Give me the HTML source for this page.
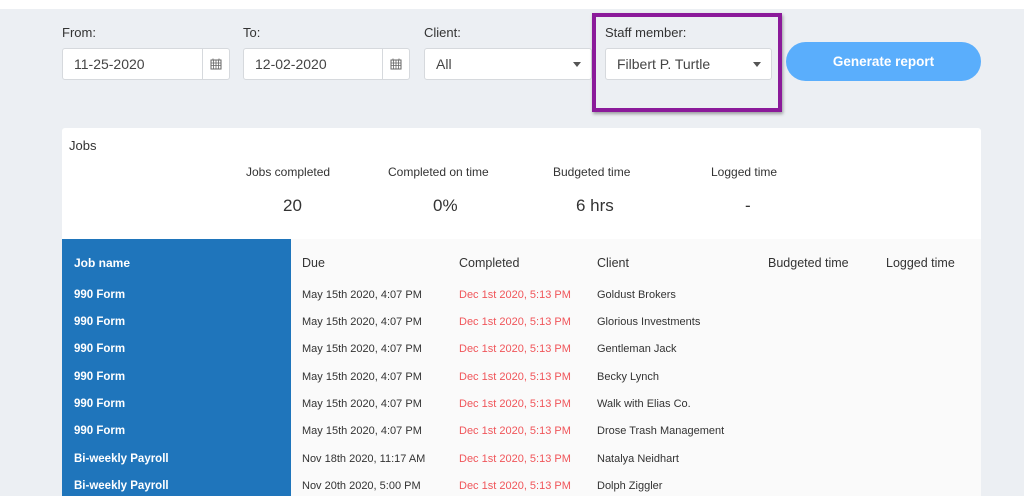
<!DOCTYPE html>
<html><head><style>
*{margin:0;padding:0;box-sizing:border-box}
html,body{width:1024px;height:496px;overflow:hidden}
body{background:#eceff3;font-family:"Liberation Sans",sans-serif;color:#333;position:relative}
.top{position:absolute;left:0;top:0;width:1024px;height:9px;background:#fff}
.a{position:absolute;white-space:nowrap}
.lbl{font-size:13px;color:#333}
.box{position:absolute;height:32px;background:#fff;border:1px solid #d6d9dd;border-radius:3px;font-size:14px;color:#444;padding-left:11px;line-height:31px}
.cal{position:absolute;right:0;top:0;width:27px;height:30px;border-left:1px solid #d6d9dd;display:flex;align-items:center;justify-content:center}
.car{position:absolute;right:10px;top:13px;width:0;height:0;border-left:4px solid transparent;border-right:4px solid transparent;border-top:5px solid #555}
.card{position:absolute;left:62px;top:128px;width:919px;height:368px;background:#fff;border-radius:3px}
.blue{position:absolute;left:62px;top:239px;width:229px;height:257px;background:#1f75bb}
.grey{position:absolute;left:291px;top:239px;width:690px;height:257px;background:#fafafa}
.jn{position:absolute;left:74px;font-size:11.5px;font-weight:bold;color:#fff}
.c{position:absolute;font-size:11px;color:#333}
.r{color:#f0555a}
.h{font-size:12.5px;color:#333}
</style></head><body>
<div class="top"></div>
<div class="a lbl" style="left:62px;top:25px">From:</div>
<div class="a lbl" style="left:243px;top:25px">To:</div>
<div class="a lbl" style="left:424px;top:25px">Client:</div>
<div class="box" style="left:62px;top:48px;width:168px">11-25-2020<div class="cal"><svg width="12" height="12" viewBox="0 0 12 12"><rect x="1" y="2" width="10" height="9" fill="none" stroke="#666"/><path d="M1 5h10M1 7.5h10M3.5 2v9M6 2v9M8.5 2v9M3 0.5v2M9 0.5v2" stroke="#666" stroke-width=".8"/></svg></div></div>
<div class="box" style="left:243px;top:48px;width:167px">12-02-2020<div class="cal"><svg width="12" height="12" viewBox="0 0 12 12"><rect x="1" y="2" width="10" height="9" fill="none" stroke="#666"/><path d="M1 5h10M1 7.5h10M3.5 2v9M6 2v9M8.5 2v9M3 0.5v2M9 0.5v2" stroke="#666" stroke-width=".8"/></svg></div></div>
<div class="box" style="left:424px;top:48px;width:168px">All<div class="car"></div></div>
<div class="a" style="left:592px;top:13px;width:190px;height:99px;border:4px solid #8b1a9a;box-shadow:1px 2px 3px rgba(0,0,0,.35)"></div>
<div class="a lbl" style="left:605px;top:25px">Staff member:</div>
<div class="box" style="left:605px;top:48px;width:167px">Filbert P. Turtle<div class="car"></div></div>
<div class="a" style="left:786px;top:42px;width:195px;height:39px;border-radius:20px;background:#5aaefc;color:#fff;font-weight:bold;font-size:13.5px;text-align:center;line-height:39px">Generate report</div>
<div class="card"></div>
<div class="a" style="left:69px;top:138px;font-size:13px">Jobs</div>
<div class="a" style="left:246px;top:165px;font-size:12px">Jobs completed</div>
<div class="a" style="left:388px;top:165px;font-size:12px">Completed on time</div>
<div class="a" style="left:553px;top:165px;font-size:12px">Budgeted time</div>
<div class="a" style="left:711px;top:165px;font-size:12px">Logged time</div>
<div class="a" style="left:283px;top:196px;font-size:17px">20</div>
<div class="a" style="left:433px;top:196px;font-size:17px">0%</div>
<div class="a" style="left:576px;top:196px;font-size:17px">6 hrs</div>
<div class="a" style="left:745px;top:196px;font-size:17px">-</div>
<div class="blue"></div><div class="grey"></div>
<div class="jn" style="top:256px;font-size:12px">Job name</div>
<div class="c h" style="left:302px;top:256px">Due</div>
<div class="c h" style="left:459px;top:256px">Completed</div>
<div class="c h" style="left:597px;top:256px">Client</div>
<div class="c h" style="left:768px;top:256px">Budgeted time</div>
<div class="c h" style="left:886px;top:256px">Logged time</div>

<div class="jn" style="top:289px">990 Form</div><div class="c" style="left:302px;top:289px">May 15th 2020, 4:07 PM</div><div class="c r" style="left:459px;top:289px">Dec 1st 2020, 5:13 PM</div><div class="c" style="left:597px;top:289px">Goldust Brokers</div>
<div class="jn" style="top:316px">990 Form</div><div class="c" style="left:302px;top:316px">May 15th 2020, 4:07 PM</div><div class="c r" style="left:459px;top:316px">Dec 1st 2020, 5:13 PM</div><div class="c" style="left:597px;top:316px">Glorious Investments</div>
<div class="jn" style="top:343px">990 Form</div><div class="c" style="left:302px;top:343px">May 15th 2020, 4:07 PM</div><div class="c r" style="left:459px;top:343px">Dec 1st 2020, 5:13 PM</div><div class="c" style="left:597px;top:343px">Gentleman Jack</div>
<div class="jn" style="top:371px">990 Form</div><div class="c" style="left:302px;top:371px">May 15th 2020, 4:07 PM</div><div class="c r" style="left:459px;top:371px">Dec 1st 2020, 5:13 PM</div><div class="c" style="left:597px;top:371px">Becky Lynch</div>
<div class="jn" style="top:398px">990 Form</div><div class="c" style="left:302px;top:398px">May 15th 2020, 4:07 PM</div><div class="c r" style="left:459px;top:398px">Dec 1st 2020, 5:13 PM</div><div class="c" style="left:597px;top:398px">Walk with Elias Co.</div>
<div class="jn" style="top:425px">990 Form</div><div class="c" style="left:302px;top:425px">May 15th 2020, 4:07 PM</div><div class="c r" style="left:459px;top:425px">Dec 1st 2020, 5:13 PM</div><div class="c" style="left:597px;top:425px">Drose Trash Management</div>
<div class="jn" style="top:453px">Bi-weekly Payroll</div><div class="c" style="left:302px;top:453px">Nov 18th 2020, 11:17 AM</div><div class="c r" style="left:459px;top:453px">Dec 1st 2020, 5:13 PM</div><div class="c" style="left:597px;top:453px">Natalya Neidhart</div>
<div class="jn" style="top:480px">Bi-weekly Payroll</div><div class="c" style="left:302px;top:480px">Nov 20th 2020, 5:00 PM</div><div class="c r" style="left:459px;top:480px">Dec 1st 2020, 5:13 PM</div><div class="c" style="left:597px;top:480px">Dolph Ziggler</div>
</body></html>
